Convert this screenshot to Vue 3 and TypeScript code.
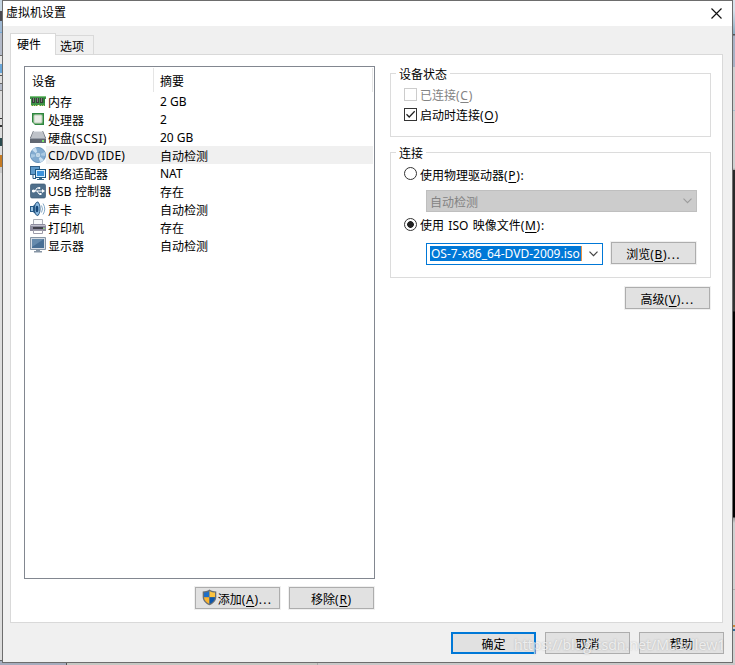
<script setup lang="ts">
import { ref } from 'vue'

type IconName = 'memory' | 'cpu' | 'disk' | 'cd' | 'network' | 'usb' | 'sound' | 'printer' | 'display'

interface Device {
  icon: IconName
  name: string
  suffix?: string
  summary: string
}

const devices: Device[] = [
  { icon: 'memory', name: '内存', summary: '2 GB' },
  { icon: 'cpu', name: '处理器', summary: '2' },
  { icon: 'disk', name: '硬盘', suffix: '(SCSI)', summary: '20 GB' },
  { icon: 'cd', name: 'CD/DVD (IDE)', summary: '自动检测' },
  { icon: 'network', name: '网络适配器', summary: 'NAT' },
  { icon: 'usb', name: 'USB 控制器', summary: '存在' },
  { icon: 'sound', name: '声卡', summary: '自动检测' },
  { icon: 'printer', name: '打印机', summary: '存在' },
  { icon: 'display', name: '显示器', summary: '自动检测' },
]

const selected = ref(3)
const startConnected = ref(true)
const source = ref<'physical' | 'iso'>('iso')

// Han glyphs sit one pixel lower than Latin text in the list.
const isHan = (text: string): boolean => /^[\u4e00-\u9fff]/.test(text)
</script>

<template>
  <div class="desktop">
    <section class="dialog">
      <header class="titlebar">
        <span>虚拟机设置</span>
        <svg class="close" width="11" height="11" viewBox="0 0 11 11">
          <path d="M.5 .5L10.500 10.500M10.500 .5L.5 10.500" stroke="#111" stroke-width="1.150" />
        </svg>
      </header>

      <nav class="tabs">
        <div class="tab active">硬件</div>
        <div class="tab">选项</div>
      </nav>

      <main class="panel">
        <div class="left">
          <div class="list">
            <div class="list-head">
              <span class="col-name">设备</span>
              <span class="col-sum">摘要</span>
            </div>
            <div
              v-for="(d, i) in devices"
              :key="d.name"
              class="row"
              :class="{ selected: i === selected }"
              @click="selected = i"
            >
              <svg class="icon" width="16" height="16" viewBox="0 0 16 16">
                <template v-if="d.icon === 'memory'">
                  <path d="M0 3H16V6H15V13H9V12H8V13H1V6H0Z" fill="#3f9448" />
                  <path d="M0 3.500H16" stroke="#7cc47c" />
                  <path d="M2 5H5V10H2ZM6 5H9V10H6ZM10 5H13V10H10Z" fill="#3a3e3a" />
                  <path d="M3.500 5V9M7.500 5V9M11.500 5V9" stroke="#7d827d" />
                  <path d="M1 12.500H15" stroke="#c8cf72" stroke-dasharray="1 1" />
                  <path d="M14 5V10" stroke="#1d6a28" />
                </template>
                <template v-else-if="d.icon === 'cpu'">
                  <rect x="2.500" y="2.500" width="11" height="11" fill="#4c9f55" stroke="#2e8540" />
                  <rect x="4" y="4" width="8" height="8" rx="1" fill="#e9ece6" stroke="#b9c9b5" />
                  <path d="M2 14H5L2 11Z" fill="#fff" />
                </template>
                <template v-else-if="d.icon === 'disk'">
                  <path d="M3 2H13L16 9V14H0V9Z" fill="#626872" />
                  <path d="M3.500 2H12.500L15.300 9.500H.7Z" fill="#bfc3c9" />
                  <path d="M4 2.500H12" stroke="#e1e4e8" />
                  <path d="M0 9.500H16" stroke="#949ba5" />
                  <path d="M12 11H14V13H12Z" fill="#79e268" />
                </template>
                <template v-else-if="d.icon === 'cd'">
                  <circle cx="8" cy="8" r="7.600" fill="#82abd0" stroke="#5686b2" stroke-width=".8" />
                  <path d="M8 8L2 3A8 8 0 0 1 6 .8ZM8 8L14 13A8 8 0 0 1 10 15.200Z" fill="#c7def0" />
                  <path d="M8 8L15 5A8 8 0 0 1 15.300 9ZM8 8L.8 7A8 8 0 0 0 1.500 11Z" fill="#a9c9e3" />
                  <circle cx="8" cy="8" r="2.700" fill="#d7e7f3" stroke="#6998c0" stroke-width=".7" />
                  <circle cx="8" cy="8" r="1.100" fill="#fff" stroke="#6998c0" stroke-width=".5" />
                </template>
                <template v-else-if="d.icon === 'network'">
                  <path d="M0 1H10V10H0Z" fill="#315f88" />
                  <path d="M1 2H9V9H1Z" fill="#5f9aca" />
                  <path d="M3 10V13.500H6" fill="none" stroke="#315f88" />
                  <path d="M5 4H16V13H5Z" fill="#1c567f" />
                  <path d="M6 5H15V12H6Z" fill="#d9efff" />
                  <path d="M7 6H14V11H7Z" fill="#3d93dc" />
                  <path d="M9 13H12V14H14V15H7V14H9Z" fill="#35698c" />
                </template>
                <template v-else-if="d.icon === 'usb'">
                  <rect x=".5" y="1" width="15" height="14" rx="1.500" fill="#4f6f8b" stroke="#3d5a73" stroke-width=".7" />
                  <path d="M2 8H12M5 8L7 5H9M7 8L9 11H10" stroke="#fff" fill="none" />
                  <path d="M12 6L15 8L12 10Z" fill="#fff" />
                  <circle cx="3.500" cy="8" r="1.600" fill="#fff" />
                  <circle cx="9.300" cy="5" r="1.100" fill="#fff" />
                  <path d="M9.500 10H11.500V12H9.500Z" fill="#fff" />
                </template>
                <template v-else-if="d.icon === 'sound'">
                  <path d="M0 5H3L8 .5C10 3 10 12 8 15L3 11H0Z" fill="#275b88" />
                  <path d="M1 6H3V10H1Z" fill="#9fc5e2" />
                  <ellipse cx="7.300" cy="7.800" rx="2.800" ry="6.700" fill="#8ab9df" stroke="#1d4972" stroke-width=".8" />
                  <ellipse cx="7" cy="8" rx="1.400" ry="3.200" fill="#164778" />
                  <path d="M11.500 4.500Q13.500 8 11.500 11.500M13 2.500Q16.500 8 13 13.500" fill="none" stroke="#86aac8" />
                </template>
                <template v-else-if="d.icon === 'printer'">
                  <path d="M3.500 .5H12.500V6H3.500Z" fill="#f7f8fa" stroke="#a9adb5" />
                  <path d="M1 5H15L16 7V12H0V7Z" fill="#8d8c9f" />
                  <path d="M1 6.500H15" stroke="#c1c1cd" />
                  <path d="M3 8H13V10H3Z" fill="#41414c" />
                  <path d="M3.500 11.500H12.500V14.500H3.500Z" fill="#fff" stroke="#9d9caa" />
                  <path d="M13 9H15V10H13Z" fill="#8dd681" />
                </template>
                <template v-else>
                  <path d="M.5 .5H15.500V12.500H.5Z" fill="#d6dde5" stroke="#8796a6" />
                  <path d="M2 2H14V11H2Z" fill="#486f95" />
                  <path d="M2 2H14L2 10Z" fill="#668bad" />
                  <path d="M6 13H10V14H12V15.500H4V14H6Z" fill="#8796a6" />
                </template>
              </svg>
              <span class="cell" :class="{ han: isHan(d.name), wide: !isHan(d.name) }">{{ d.name }}<span v-if="d.suffix" class="suffix">{{ d.suffix }}</span></span>
              <span class="cell" :class="{ han: isHan(d.summary) }">{{ d.summary }}</span>
            </div>
          </div>
          <div class="list-actions">
            <button class="btn">
              <svg class="shield" width="15" height="17" viewBox="0 0 15 17">
                <path d="M7.500 .6C5.500 2 3 2.500 .7 2.500V8C.7 12 4 14.800 7.500 16.300C11 14.800 14.300 12 14.300 8V2.500C12 2.500 9.500 2 7.500 .6Z" fill="#6b7074" />
                <path d="M7.500 2C5.700 3 4 3.500 2 3.600V8.300H7.500Z" fill="#1f6fc8" />
                <path d="M7.500 2C9.300 3 11 3.500 13 3.600V8.300H7.500Z" fill="#fdc33f" />
                <path d="M2 8.300H7.500V15C4.500 13.500 2.100 11.500 2 8.300Z" fill="#fdb52e" />
                <path d="M13 8.300H7.500V15C10.500 13.500 12.900 11.500 13 8.300Z" fill="#0d57ad" />
              </svg>
              <span>添加<span class="key">(<u>A</u>)</span><span class="dots">...</span></span>
            </button>
            <button class="btn"><span>移除<span class="key">(<u>R</u>)</span></span></button>
          </div>
        </div>

        <div class="right">
          <div class="group status">
            <div class="legend">设备状态</div>
            <div class="option disabled">
              <span class="check"></span>
              <span class="label">已连接<span class="key">(<u>C</u>)</span></span>
            </div>
            <div class="option" @click="startConnected = !startConnected">
              <span class="check">
                <svg v-if="startConnected" width="11" height="11" viewBox="0 0 11 11">
                  <path d="M1.500 5.300L4.200 8L9.700 2.300" fill="none" stroke="#222" stroke-width="1.250" />
                </svg>
              </span>
              <span class="label">启动时连接<span class="key">(<u>O</u>)</span></span>
            </div>
          </div>

          <div class="group connection">
            <div class="legend short">连接</div>
            <div class="option" @click="source = 'physical'">
              <span class="radio" :class="{ on: source === 'physical' }"></span>
              <span class="label low">使用物理驱动器<span class="key">(<u>P</u>):</span></span>
            </div>
            <div class="combo off">
              <span>自动检测</span>
              <svg width="9" height="6" viewBox="0 0 9 6">
                <path d="M.5 .7L4.500 4.700L8.500 .7" fill="none" stroke="#9c9c9c" stroke-width="1.100" />
              </svg>
            </div>
            <div class="option" @click="source = 'iso'">
              <span class="radio" :class="{ on: source === 'iso' }"></span>
              <span class="label iso-label">使用 ISO 映像文件<span class="key">(<u>M</u>):</span></span>
            </div>
            <div class="iso-line">
              <div class="combo active">
                <span class="selection">OS-7-x86_64-DVD-2009.iso</span>
                <svg width="9" height="6" viewBox="0 0 9 6">
                  <path d="M.5 .7L4.500 4.700L8.500 .7" fill="none" stroke="#444" stroke-width="1.200" />
                </svg>
              </div>
              <button class="btn"><span>浏览<span class="key">(<u>B</u>)</span><span class="dots">...</span></span></button>
            </div>
          </div>

          <button class="btn advanced"><span>高级<span class="key">(<u>V</u>)</span><span class="dots">...</span></span></button>
        </div>
      </main>

      <footer class="footer">
        <button class="btn primary"><span>确定</span></button>
        <button class="btn"><span>取消</span></button>
        <button class="btn"><span>帮助</span></button>
      </footer>
    </section>
    <div class="watermark">https://blog.csdn.net/Muscllew1</div>
  </div>
</template>

<style>
body {
  margin: 0;
  overflow: hidden;
}
</style>

<style scoped>
* {
  box-sizing: border-box;
}

.desktop {
  position: relative;
  width: 735px;
  height: 665px;
  padding: 0 2px;
  font: 12px/16px "Noto Sans", "Noto Sans CJK SC", sans-serif;
  color: #000;
  background:
    linear-gradient(90deg, #a5acbd 0 66px, #555 66px 67px, #c5c8c3 67px 317px, #aaa 317px 318px, #c8c8c8 318px) 0 663px / 735px 2px no-repeat,
    linear-gradient(#c5d5e2 0 11px, #4b4b52 11px 21px, #9eb8d3 21px 32px, #74a9d6 32px 33px, #b3bac9 33px 55px, #666 55px 56px, #e6e6e6 56px 64px, #69a6d9 64px 73px, #ddd 73px 75px, #555 75px 76px, #ddd 76px 83px, #666 83px 84px, #b3bac9 84px 90px, #777 90px 91px, #ddd 91px 118px, #333 118px 119px, #ddd 119px 125px, #333 125px 127px, #ddd 127px 138px, #2a4a4d 138px 146px, #ddd 146px 155px, #c67b23 155px 167px, #c9c9c9 167px 173px, #ddd 173px 660px, #666 660px 661px, #a5acbd 661px) 0 0 / 2px 665px no-repeat,
    linear-gradient(#d8e2eb 0 10px, #88aac0 34px, #555 34px 35px, #a8b1c5 36px 67px, #d0d0d0 67px 110px, #a8bfd0 110px 111px, #d0d0d0 111px 168px, #999 170px, #292929 170px 260px, #333 311px, #000 312px 517px, #999 518px, #d0d0d0 523px 589px, #b0b0b0 589px 590px, #d0d0d0 590px 625px, #c98839 625px 627px, #d0d0d0 627px 629px, #326b96 629px 631px, #d0d0d0 631px) 733px 0 / 2px 665px no-repeat,
    #d0d0d0;
}

.dialog {
  display: flex;
  flex-direction: column;
  width: 731px;
  height: 663px;
  border: 1px solid #6d6d6d;
  background: #f0f0f0;
}

.titlebar {
  display: flex;
  align-items: center;
  justify-content: space-between;
  height: 25px;
  padding: 0 10px 1px 3px;
  background: #fff;
}

.tabs {
  display: flex;
  align-items: flex-end;
  height: 28px;
  padding-left: 7px;
}

.tab {
  width: 38px;
  height: 19px;
  padding: 3px 0 0 4px;
  border: 1px solid #d9d9d9;
  border-bottom: 0;
  border-left: 0;
}

.tab.active {
  width: 46px;
  height: 22px;
  margin-bottom: -1px;
  padding: 3px 0 0 6px;
  border-left: 1px solid #d9d9d9;
  background: #fff;
  z-index: 1;
}

.panel {
  display: flex;
  justify-content: space-between;
  width: 713px;
  height: 569px;
  margin-left: 7px;
  padding: 11px 11px 0 13px;
  border: 1px solid #d9d9d9;
  background: #fff;
}

.left {
  width: 351px;
}

.list {
  height: 513px;
  border: 1px solid #828790;
}

.list-head {
  display: grid;
  grid-template-columns: 129px 1fr;
  height: 25px;
  padding: 1px 1px 0 0;
}

.list-head span {
  padding: 6px 0 0 7px;
  border-right: 1px solid #e5e5e5;
  height: 24px;
}

.list-head .col-sum {
  padding-left: 6px;
}

.row {
  display: grid;
  grid-template-columns: 16px 112px 1fr;
  height: 18px;
  padding: 0 1px 0 5px;
}

.icon {
  display: block;
  margin-top: 1px;
}

.cell {
  height: 18px;
  padding: 1px 0 0 2px;
  line-height: 17px;
  white-space: nowrap;
}

.cell.han {
  padding-top: 2px;
}

.cell.wide {
  letter-spacing: 0.15px;
}

.suffix {
  letter-spacing: 0.5px;
}

.selected .cell {
  background: #f0f0f0;
}

.list-actions {
  display: flex;
  justify-content: flex-end;
  gap: 9px;
  margin: 8px 1px 0 0;
}

.btn {
  display: flex;
  align-items: center;
  justify-content: center;
  flex: none;
  width: 85px;
  height: 22px;
  padding: 3px 0 0;
  border: 1px solid #adadad;
  outline: 1px solid #f0f0f0;
  background: #e1e1e1;
  color: #000;
  font: inherit;
  white-space: nowrap;
}

.shield {
  margin: -4px 1px 0 -1px;
}

u {
  text-decoration: underline;
  text-decoration-thickness: 1px;
  text-underline-offset: 2px;
  text-decoration-skip-ink: none;
}

.key {
  letter-spacing: 0.7px;
}

.dots {
  letter-spacing: 1.3px;
}

.right {
  display: flex;
  flex-direction: column;
  width: 321px;
  padding-top: 7px;
}

.group {
  display: flex;
  flex-direction: column;
  align-items: flex-start;
  padding-left: 13px;
  border: 1px solid #dcdcdc;
}

.status {
  height: 64px;
}

.connection {
  height: 126px;
  margin-top: 15px;
}

.legend {
  height: 16px;
  width: 54px;
  margin: -8px 0 0 -8px;
  padding: 1px 0 0 3px;
  background: #fff;
  white-space: nowrap;
}

.legend.short {
  width: 30px;
}

.option {
  display: flex;
  align-items: center;
  gap: 3px;
  height: 16px;
  margin-top: 4px;
  white-space: nowrap;
}

.label {
  padding-top: 4px;
}

.label.low {
  padding-top: 6px;
}

.iso-label {
  word-spacing: 1.2px;
}

.option.disabled {
  color: #838383;
}

.check,
.radio {
  flex: none;
  width: 13px;
  height: 13px;
  border: 1px solid #333;
  background: #fff;
}

.check svg {
  display: block;
}

.disabled .check {
  border-color: #ccc;
}

.radio {
  border-radius: 50%;
}

.radio.on {
  background: radial-gradient(circle, #222 0 3px, #fff 3.700px);
}

.combo {
  display: flex;
  align-items: center;
  justify-content: space-between;
  height: 22px;
  padding: 0 4px 0 3px;
}

.combo.off {
  width: 271px;
  margin: 9px 0 2px 22px;
  border: 1px solid #bfbfbf;
  background: #ccc;
  color: #838383;
}

.combo.off span {
  padding-top: 4px;
}

.combo.off + .option {
  margin-top: 2px;
}

.iso-line {
  display: flex;
  gap: 8px;
  margin: 10px 0 0 22px;
}

.combo.active {
  width: 177px;
  margin-top: 1px;
  border: 1px solid #0078d7;
}

.selection {
  width: 152px;
  height: 15px;
  margin-top: -1px;
  padding-left: 1px;
  overflow: hidden;
  border-right: 1px solid #e89345;
  background: #0078d7;
  color: #fff;
  line-height: 15px;
  white-space: nowrap;
}

.advanced {
  align-self: flex-end;
  margin: 9px 1px 0 0;
}

.footer {
  display: flex;
  justify-content: flex-end;
  gap: 9px;
  padding: 9px 8px 0 0;
}

.btn.primary {
  border: 2px solid #0078d7;
}

.watermark {
  position: absolute;
  left: 514px;
  top: 636px;
  font: 14.2px/18px "Open Sans", "Noto Sans", sans-serif;
  color: rgba(255, 255, 255, 0.72);
  text-shadow: 0 0 2px rgba(110, 110, 110, 0.45);
  white-space: nowrap;
}
</style>
